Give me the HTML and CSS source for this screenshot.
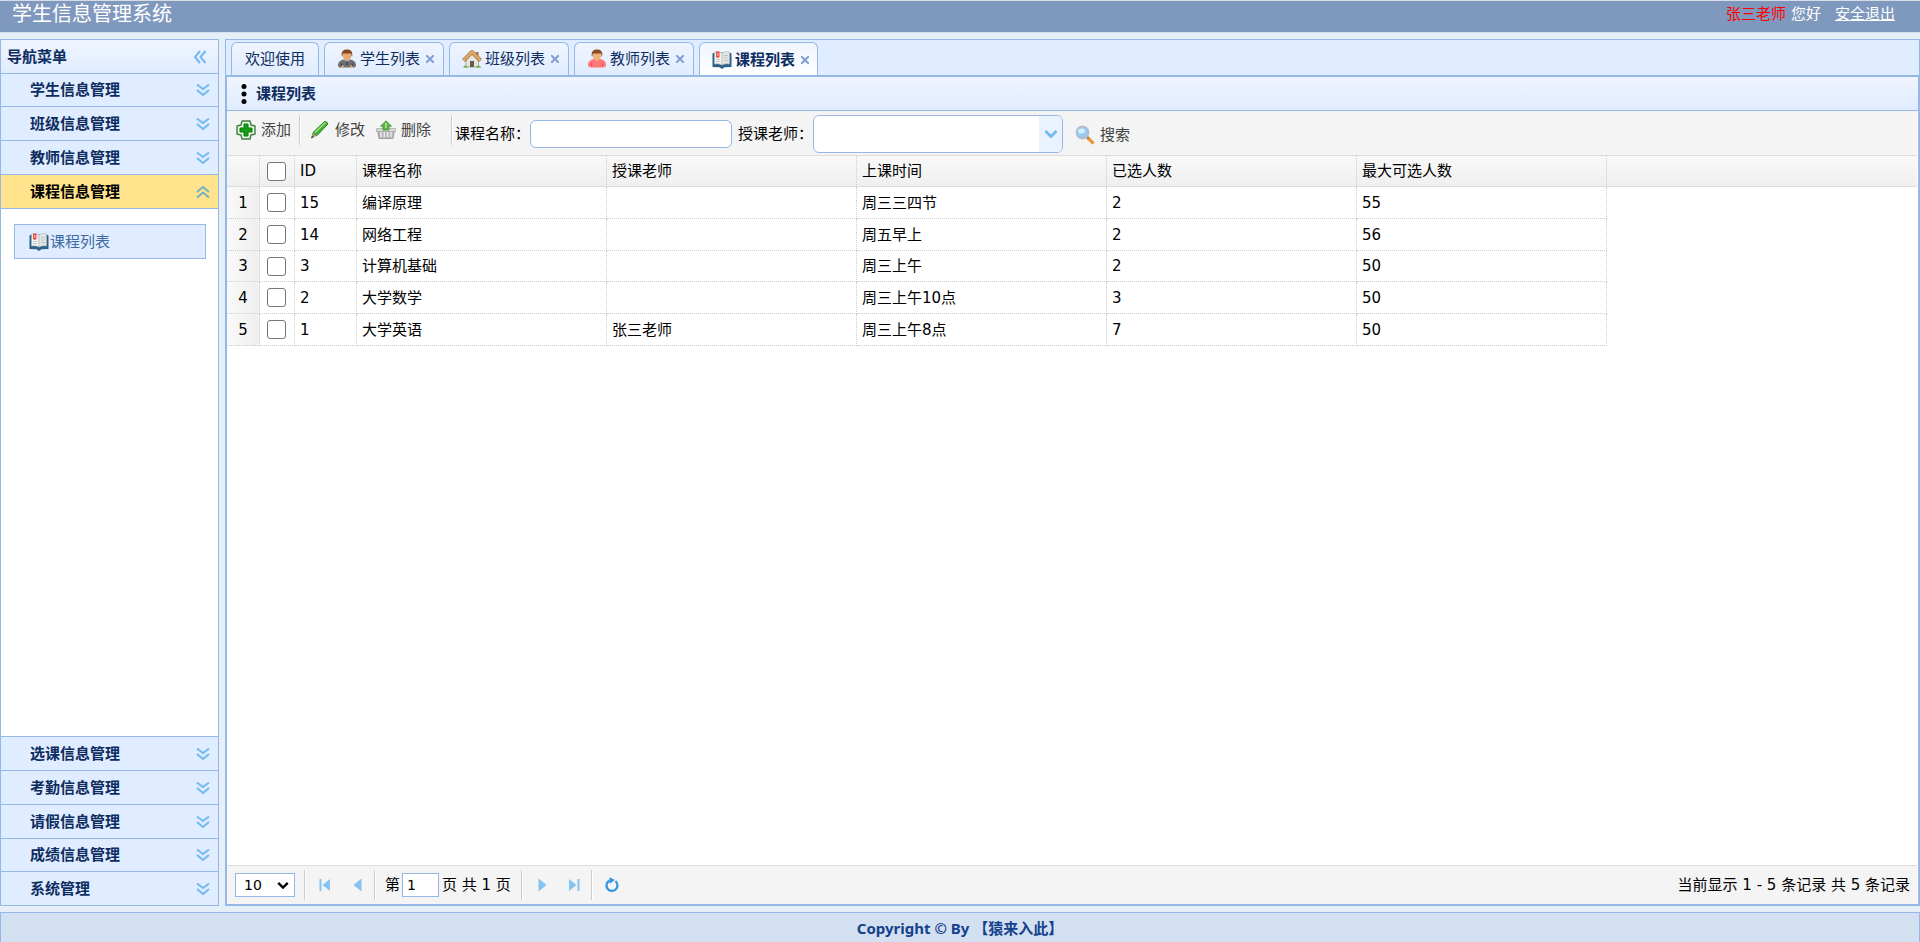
FILE: index.html
```html
<!DOCTYPE html>
<html lang="zh-CN">
<head>
<meta charset="utf-8">
<title>学生信息管理系统</title>
<link rel="stylesheet" href="styles.css">
</head>
<body>
<svg class="defs" aria-hidden="true">
  <defs>
    <linearGradient id="g-green" x1="0" y1="0" x2="1" y2="1"><stop offset="0" stop-color="#7fd660"/><stop offset="1" stop-color="#2f9a28"/></linearGradient>
    <linearGradient id="g-grey" x1="0" y1="0" x2="0" y2="1"><stop offset="0" stop-color="#dedede"/><stop offset="1" stop-color="#9c9c9c"/></linearGradient>
    <radialGradient id="g-lens" cx="0.5" cy="0.7" r="0.7"><stop offset="0" stop-color="#cdf0ff"/><stop offset="1" stop-color="#6fb4ee"/></radialGradient>
    <symbol id="i-down" viewBox="0 0 14 14"><path d="M1 1.500l6 4.500 6-4.500M1 7l6 5 6-5" fill="none" stroke="#74b8f0" stroke-width="2"/></symbol>
    <symbol id="i-up" viewBox="0 0 14 14"><path d="M1 7l6-5 6 5M1 12.500l6-5 6 5" fill="none" stroke="#72b2bd" stroke-width="2"/></symbol>
    <symbol id="i-left" viewBox="0 0 14 14"><path d="M7 1L2 7l5 6M12.500 1l-5 6 5 6" fill="none" stroke="#74b8f0" stroke-width="2"/></symbol>
    <symbol id="i-chev" viewBox="0 0 14 10"><path d="M1.500 2l5.500 5.500L12.500 2" fill="none" stroke="currentColor" stroke-width="2.800"/></symbol>
    <symbol id="i-student" viewBox="0 0 20 20">
      <path d="M1 16.500c0-4 3-5.500 6-6h6c3 .5 6 2 6 6 0 1.200-1 2-2 2H3c-1 0-2-.8-2-2z" fill="#6d6f73"/>
      <path d="M4.500 18v-3.500M15.500 18v-3.500" stroke="#45474b" stroke-width="1.500"/>
      <path d="M7.500 10.500l2.500 3.500 2.500-3.500z" fill="#ddd"/><path d="M10 11.500v4.500" stroke="#333" stroke-width="1.300"/>
      <ellipse cx="10" cy="6.500" rx="4.300" ry="4.800" fill="#e8aa74"/>
      <path d="M5 8C3.500 2 7 .5 10 .5S16.500 2 15 8l-1-3.500H6z" fill="#85491f"/>
      <path d="M2.500 18.500l3.500-2.500 1.500 2.500zM17.500 18.500L14 16l-1.500 2.500z" fill="#dfa873"/>
    </symbol>
    <symbol id="i-teacher" viewBox="0 0 20 20">
      <path d="M1 16c0-4 3-5.500 6-6h6c3 .5 6 2 6 6 0 1.500-1 2.500-3 2.500H4c-2 0-3-1-3-2.500z" fill="#ff7777"/>
      <path d="M7.500 10l2.500 3 2.500-3z" fill="#eba977"/>
      <path d="M4.500 17v-3M15.500 17v-3" stroke="#e45151"/>
      <ellipse cx="10" cy="6.500" rx="4.300" ry="4.800" fill="#eeb07c"/>
      <path d="M5 8C3.500 2 7 .5 10 .5S16.500 2 15 8l-1-3.500H6z" fill="#8d4b25"/>
    </symbol>
    <symbol id="i-house" viewBox="0 0 20 20">
      <path d="M4 8.500V18h12.500V8.500L10 3z" fill="#e6e6e0" stroke="#9a9a90" stroke-width=".8"/>
      <path d="M14 3h2.500v5L14 6z" fill="#b46a3b"/>
      <path d="M1.500 11.500L10 3l8.500 8.500" fill="none" stroke="#a5743a" stroke-width="4" stroke-linejoin="round"/>
      <path d="M1.500 11.200L10 2.900l8.500 8.300" fill="none" stroke="#d9a766" stroke-width="2.800"/>
      <path d="M8 18v-6h4v6z" fill="#6b5a4c"/>
      <path d="M1 18.500q2-4 5 0zM13.500 18.500q3-4 6 0z" fill="#69a83f"/>
    </symbol>
    <symbol id="i-book" viewBox="0 0 20 20">
      <path d="M.5 3.500l2-1h15l2 1V17l-7 .3-2.500 1.700-2.500-1.700L.5 17z" fill="#2e6188"/>
      <path d="M2.500 2Q7 .5 10 3v12q-4-2-7.500-1z" fill="#f4f4f1" stroke="#a8b8c3" stroke-width=".6"/>
      <path d="M17.500 2Q13 .5 10 3v12q4-2 7.500-1z" fill="#e4e4e1" stroke="#a8b8c3" stroke-width=".6"/>
      <path d="M4 9.500h4M4 11.500h4M12 5.500h4M12 8h4M12 10.500h4" stroke="#bbb" stroke-width=".8"/>
      <path d="M4 1.500h3.500V7L5.700 8 4 7z" fill="#ed4b40"/><path d="M5.300 3h1v3h-1z" fill="#ffc5bb"/>
    </symbol>
    <symbol id="i-add" viewBox="0 0 20 20">
      <path d="M6 1h8l1 4 4 1v8l-4 1-1 4H6l-1-4-4-1V6l4-1z" fill="#e9f6e6" stroke="#3c7f40" stroke-width="1.400" stroke-linejoin="round"/>
      <path d="M8 4h4v4h4v4h-4v4H8v-4H4V8h4z" fill="#179c17" stroke="#0c7c12"/>
    </symbol>
    <symbol id="i-edit" viewBox="0 0 20 20">
      <path d="M2 16.500L3.500 12 14.500 1.500q2.500-.5 3.500 2.500L7.500 15z" fill="#44ad34" stroke="#2f8629"/>
      <path d="M5 12.500L15.500 2.500" stroke="#9be37e" stroke-width="1.500"/>
      <path d="M1 18.500l2-5.500 3.500 3z" fill="#a4a07c"/><path d="M1 18.500l1-2.800 1.800 1.500z" fill="#245c2a"/>
    </symbol>
    <symbol id="i-del" viewBox="0 0 20 20">
      <path d="M1.500 10h17l-1.500 8.500H3z" fill="#b9b9b9" stroke="#999" stroke-width=".9"/>
      <path d="M5 12v5M8.300 12v5M11.600 12v5M15 12v5" stroke="#eee" stroke-width="1.300"/>
      <path d="M.5 8.500h19v3H.5z" fill="#d8d8d8" stroke="#a5a5a5" stroke-width=".7"/>
      <path d="M10 .8l5.500 5.400H13V10H7V6.200H4.500z" fill="#62b543" stroke="#48953b" stroke-width=".9"/>
      <path d="M10 3v5" stroke="#b7e69f" stroke-width="1.500"/>
    </symbol>
    <symbol id="i-search" viewBox="0 0 20 20">
      <path d="M13 13l4.500 4.500" stroke="#e8963a" stroke-width="3.200" stroke-linecap="round"/>
      <path d="M11.500 11.500l2 2" stroke="#777" stroke-width="2"/>
      <circle cx="7.500" cy="7.500" r="6" fill="#93cbf5" stroke="#b7bdca" stroke-width="1.800"/>
      <ellipse cx="6.500" cy="6" rx="3.500" ry="2.500" fill="#d4eeff"/>
    </symbol>
    <symbol id="i-first" viewBox="0 0 14 14"><path d="M1.500 1h2v12h-2zM12 1v12L4.500 7z" fill="#85c4f0"/></symbol>
    <symbol id="i-prev" viewBox="0 0 14 14"><path d="M11.500 0.500v13L3.500 7z" fill="#85c4f0"/></symbol>
    <symbol id="i-next" viewBox="0 0 14 14"><path d="M3.500 0.500v13l8-6.500z" fill="#85c4f0"/></symbol>
    <symbol id="i-last" viewBox="0 0 14 14"><path d="M10.500 1h2v12h-2zM2 1v12l7.500-6z" fill="#85c4f0"/></symbol>
    <symbol id="i-reload" viewBox="0 0 16 16"><path d="M5.500 3.500A5.500 5.500 0 1 0 11.500 4.200" fill="none" stroke="#3597df" stroke-width="2.300"/><path d="M5.500.2v6.500L11 3z" fill="#3597df"/></symbol>
    <symbol id="i-dots" viewBox="0 0 20 20"><circle cx="10" cy="2.500" r="2.500"/><circle cx="10" cy="10" r="2.500"/><circle cx="10" cy="17.500" r="2.500"/></symbol>
  </defs>
</svg>

<header class="topbar">
  <h1 class="topbar-title">学生信息管理系统</h1>
  <p class="topbar-user"><span class="user-name">张三老师</span><span>您好</span><a class="logout" href="#">安全退出</a></p>
</header>

<div class="workspace">
  <nav class="sidebar" aria-label="导航菜单">
    <div class="sidebar-head"><h2 class="sidebar-title">导航菜单</h2><button class="plain" aria-label="折叠"><svg class="i14"><use href="#i-left"/></svg></button></div>
    <button class="menu">学生信息管理<svg class="i14"><use href="#i-down"/></svg></button>
    <button class="menu">班级信息管理<svg class="i14"><use href="#i-down"/></svg></button>
    <button class="menu">教师信息管理<svg class="i14"><use href="#i-down"/></svg></button>
    <button class="menu menu-open" aria-expanded="true">课程信息管理<svg class="i14"><use href="#i-up"/></svg></button>
    <div class="submenu"><a class="submenu-link" href="#"><svg class="i20"><use href="#i-book"/></svg>课程列表</a></div>
    <button class="menu">选课信息管理<svg class="i14"><use href="#i-down"/></svg></button>
    <button class="menu">考勤信息管理<svg class="i14"><use href="#i-down"/></svg></button>
    <button class="menu">请假信息管理<svg class="i14"><use href="#i-down"/></svg></button>
    <button class="menu">成绩信息管理<svg class="i14"><use href="#i-down"/></svg></button>
    <button class="menu">系统管理<svg class="i14"><use href="#i-down"/></svg></button>
  </nav>

  <main class="main">
    <div class="tabs">
      <div class="tab"><button class="tab-name">欢迎使用</button></div>
      <div class="tab"><button class="tab-name"><svg class="i20"><use href="#i-student"/></svg>学生列表</button><button class="tab-close" aria-label="关闭学生列表"><svg class="i8" viewBox="0 0 8 8"><path d="M0 0l8 8M8 0L0 8"/></svg></button></div>
      <div class="tab"><button class="tab-name"><svg class="i20"><use href="#i-house"/></svg>班级列表</button><button class="tab-close" aria-label="关闭班级列表"><svg class="i8" viewBox="0 0 8 8"><path d="M0 0l8 8M8 0L0 8"/></svg></button></div>
      <div class="tab"><button class="tab-name"><svg class="i20"><use href="#i-teacher"/></svg>教师列表</button><button class="tab-close" aria-label="关闭教师列表"><svg class="i8" viewBox="0 0 8 8"><path d="M0 0l8 8M8 0L0 8"/></svg></button></div>
      <div class="tab tab-on"><button class="tab-name"><svg class="i20"><use href="#i-book"/></svg>课程列表</button><button class="tab-close" aria-label="关闭课程列表"><svg class="i8" viewBox="0 0 8 8"><path d="M0 0l8 8M8 0L0 8"/></svg></button></div>
    </div>

    <section class="panel">
      <div class="panel-head"><svg class="i20"><use href="#i-dots"/></svg><h2 class="panel-title">课程列表</h2></div>
      <div class="grid">
        <form class="toolbar">
          <div class="tools">
            <button type="button" class="tool"><svg class="i20"><use href="#i-add"/></svg>添加</button>
            <span class="sep"></span>
            <button type="button" class="tool"><svg class="i20"><use href="#i-edit"/></svg>修改</button>
            <button type="button" class="tool"><svg class="i20"><use href="#i-del"/></svg>删除</button>
            <span class="sep sep-last"></span>
          </div>
          <label for="course">课程名称：</label><input class="text" id="course" type="text">
          <label class="label-teacher" for="teacher">授课老师：</label>
          <span class="combo"><select class="combo-select" id="teacher"><option></option><option>张三老师</option></select><span class="combo-arrow"><svg class="i14"><use href="#i-chev"/></svg></span></span>
          <button type="button" class="tool search"><svg class="i20"><use href="#i-search"/></svg>搜索</button>
        </form>

        <div class="rows">
          <table class="table">
            <colgroup><col class="c-num"><col class="c-check"><col class="c-id"><col class="c-data"><col class="c-data"><col class="c-data"><col class="c-data"><col class="c-data"><col></colgroup>
            <thead>
              <tr><th></th><th class="check"><input class="box" type="checkbox" aria-label="全选"></th><th>ID</th><th>课程名称</th><th>授课老师</th><th>上课时间</th><th>已选人数</th><th>最大可选人数</th><th class="rest"></th></tr>
            </thead>
            <tbody>
              <tr><td class="num">1</td><td class="check"><input class="box" type="checkbox" aria-label="选择 15"></td><td>15</td><td>编译原理</td><td></td><td>周三三四节</td><td>2</td><td>55</td><td class="rest"></td></tr>
              <tr><td class="num">2</td><td class="check"><input class="box" type="checkbox" aria-label="选择 14"></td><td>14</td><td>网络工程</td><td></td><td>周五早上</td><td>2</td><td>56</td><td class="rest"></td></tr>
              <tr><td class="num">3</td><td class="check"><input class="box" type="checkbox" aria-label="选择 3"></td><td>3</td><td>计算机基础</td><td></td><td>周三上午</td><td>2</td><td>50</td><td class="rest"></td></tr>
              <tr><td class="num">4</td><td class="check"><input class="box" type="checkbox" aria-label="选择 2"></td><td>2</td><td>大学数学</td><td></td><td>周三上午10点</td><td>3</td><td>50</td><td class="rest"></td></tr>
              <tr><td class="num">5</td><td class="check"><input class="box" type="checkbox" aria-label="选择 1"></td><td>1</td><td>大学英语</td><td>张三老师</td><td>周三上午8点</td><td>7</td><td>50</td><td class="rest"></td></tr>
            </tbody>
          </table>
        </div>

        <div class="pager">
          <span class="size"><select class="size-select" aria-label="每页条数"><option>10</option><option>20</option></select><svg class="size-arrow"><use href="#i-chev"/></svg></span>
          <span class="sep"></span>
          <button class="page-btn" aria-label="首页"><svg class="i14"><use href="#i-first"/></svg></button>
          <button class="page-btn" aria-label="上一页"><svg class="i14"><use href="#i-prev"/></svg></button>
          <span class="sep"></span>
          <label class="page-label" for="page">第</label><input class="page-input" id="page" type="text" value="1"><span class="page-total">页 共 1 页</span>
          <span class="sep"></span>
          <button class="page-btn" aria-label="下一页"><svg class="i14"><use href="#i-next"/></svg></button>
          <button class="page-btn" aria-label="末页"><svg class="i14"><use href="#i-last"/></svg></button>
          <span class="sep"></span>
          <button class="page-btn" aria-label="刷新"><svg class="i16"><use href="#i-reload"/></svg></button>
          <span class="summary">当前显示 1 - 5 条记录 共 5 条记录</span>
        </div>
      </div>
    </section>
  </main>
</div>

<footer class="footer">Copyright © By 【猿来入此】</footer>
</body>
</html>
```

FILE: styles.css
```css
* { box-sizing: border-box; }

body {
  display: flex;
  flex-direction: column;
  height: 100vh;
  margin: 0;
  background: #e6eef8;
  color: #000;
  font: 15px/20px "DejaVu Sans", "Noto Sans CJK SC", sans-serif;
}

h1, h2, p { margin: 0; }

button, input, select {
  margin: 0;
  padding: 0;
  border: 0;
  background: none;
  color: inherit;
  font: inherit;
}

svg { display: block; flex: none; }
.defs { position: absolute; width: 0; height: 0; }
.i8 { width: 8px; height: 8px; fill: none; stroke: #7f9fd3; stroke-width: 2px; }
.i14 { width: 14px; height: 14px; }
.i16 { width: 16px; height: 16px; }
.i20 { width: 20px; height: 20px; }

.topbar {
  display: flex;
  justify-content: space-between;
  height: 33px;
  padding: 3px 25px 0 12px;
  border-top: 1px solid #d5dce4;
  border-bottom: 1px solid #d2e0f2;
  background: #7f99be;
  color: #fff;
}
.topbar-title { font-size: 20px; font-weight: 400; line-height: 20px; }
.topbar-user { display: flex; gap: 5px; }
.user-name { color: #f00; }
.logout { margin-left: 9px; color: #fff; }

.workspace { display: flex; flex: 1; gap: 6px; min-height: 0; padding: 6px 0; }

.sidebar {
  display: flex;
  flex: none;
  flex-direction: column;
  width: 219px;
  border: 1px solid #95b8e7;
  background: #fff;
}
.sidebar-head {
  display: flex;
  align-items: center;
  justify-content: space-between;
  height: 34px;
  padding: 0 11px 0 6px;
  border-bottom: 1px solid #95b8e7;
  background: linear-gradient(#eff5ff, #e0ecff);
}
.sidebar-title, .panel-title { color: #0e2d5f; font-size: 15px; font-weight: 700; }
.menu {
  display: flex;
  flex: none;
  align-items: center;
  justify-content: space-between;
  height: 34px;
  padding: 0 8px 0 29px;
  border-bottom: 1px solid #95b8e7;
  background: #e0ecff;
  color: #0e2d5f;
  font-weight: 700;
}
.menu:nth-child(2), .menu:nth-child(10), .menu:last-child { height: 33px; }
.menu:last-child { border-bottom: 0; }
.menu-open { background: #ffe48d; color: #000; }
.submenu { flex: 1; padding: 15px 12px 0 13px; border-bottom: 1px solid #95b8e7; }
.submenu-link {
  display: flex;
  align-items: center;
  height: 35px;
  padding-left: 14px;
  gap: 1px;
  border: 1px solid #95b8e7;
  background: #e0ecff;
  color: #416aa3;
  text-decoration: none;
}

.main { display: flex; flex: 1; flex-direction: column; min-width: 0; }
.tabs {
  display: flex;
  flex: none;
  gap: 5px;
  height: 36px;
  padding: 2px 5px 0;
  border: 1px solid #95b8e7;
  border-bottom: 0;
  background: #e0ecff;
}
.tab {
  display: flex;
  align-items: center;
  gap: 6px;
  padding: 0 9px 0 12px;
  border: 1px solid #95b8e7;
  border-bottom: 0;
  border-radius: 6px 6px 0 0;
  background: linear-gradient(#eff5ff, #e0ecff);
  color: #0e2d5f;
}
.tab:first-child { padding: 0 13px; }
.tab-name { display: flex; align-items: center; gap: 3px; }
.tab-on {
  height: 34px;
  padding-right: 8px;
  background: linear-gradient(#eff5ff, #fff);
  font-weight: 700;
}

.panel {
  display: flex;
  flex: 1;
  flex-direction: column;
  min-height: 0;
  border: 2px solid #95b8e7;
}
.panel-head {
  display: flex;
  flex: none;
  align-items: center;
  gap: 2px;
  height: 34px;
  padding: 1px 0 0 7px;
  border-bottom: 1px solid #95b8e7;
  background: linear-gradient(#eff5ff, #e0ecff);
}
.grid {
  display: flex;
  flex: 1;
  flex-direction: column;
  min-height: 0;
  padding-right: 1px;
  background: #fff;
}

.toolbar {
  display: flex;
  flex: none;
  align-items: center;
  height: 45px;
  padding-top: 2px;
  border-bottom: 1px solid #ddd;
  background: #f4f4f4;
}
.tools { display: flex; align-items: center; align-self: flex-start; padding: 2px 0 0 9px; }
.tool { display: flex; align-items: center; gap: 5px; color: #444; }
.tools .sep { margin: 0 9px 0 8px; }
.tools .tool + .tool { margin-left: 11px; }
.tools .sep-last { margin: 0 2px 0 20px; }
.sep { flex: none; width: 2px; height: 30px; border-left: 1px solid #ccc; border-right: 1px solid #fff; }
.text {
  width: 202px;
  height: 28px;
  padding: 0 5px;
  border: 1px solid #95b8e7;
  border-radius: 6px;
  background: #fff;
}
.label-teacher { margin-left: 6px; }
.combo { position: relative; width: 250px; height: 38px; }
.combo-select {
  width: 100%;
  height: 100%;
  padding: 0 28px 0 5px;
  appearance: none;
  border: 1px solid #95b8e7;
  border-radius: 6px;
  background: #fff;
}
.combo-arrow {
  position: absolute;
  top: 1px;
  right: 1px;
  bottom: 1px;
  display: flex;
  align-items: center;
  justify-content: center;
  width: 23px;
  border-radius: 0 5px 5px 0;
  background: #eaf2ff;
  color: #74b8f0;
  pointer-events: none;
}
.search { padding: 2px 0 0 12px; }

.rows { flex: 1; min-height: 0; overflow: hidden; }
.table { width: 100%; border-spacing: 0; table-layout: fixed; }
.c-num { width: 33px; }
.c-check { width: 35px; }
.c-id { width: 62px; }
.c-data { width: 250px; }
.table th, .table td {
  height: 32px;
  padding: 0 5px;
  border-right: 1px dotted #ccc;
  border-bottom: 1px dotted #ccc;
  font-weight: 400;
  text-align: left;
}
.table th {
  height: 31px;
  border-bottom: 1px solid #ddd;
  background: linear-gradient(#f9f9f9, #efefef);
}
.table tr:nth-child(3) td { height: 31px; }
.table .num { padding: 0; background: linear-gradient(90deg, #f9f9f9, #efefef); text-align: center; }
.table .check { padding: 0 0 0 7px; }
.table .rest { border-right: 0; }
.table td.rest { border-bottom: 0; }
.box {
  display: block;
  width: 19px;
  height: 19px;
  appearance: none;
  border: 1px solid #767676;
  border-radius: 3px;
  background: #fff;
}

.pager {
  display: flex;
  flex: none;
  align-items: center;
  height: 39px;
  padding: 0 7px 0 8px;
  border-top: 1px solid #ddd;
  background: #f4f4f4;
}
.size { position: relative; width: 60px; height: 24px; margin-right: 9px; }
.size-select {
  width: 100%;
  height: 100%;
  padding-left: 8px;
  appearance: none;
  border: 1px solid #95b8e7;
  background: #fff;
  font-size: 14px;
}
.size-arrow { position: absolute; top: 8px; right: 6px; width: 12px; height: 9px; pointer-events: none; }
.page-btn { display: flex; justify-content: center; width: 32px; }
.pager .sep + .page-btn { margin-left: 3px; }
.page-btn + .sep { margin-left: 1px; }
.page-label { margin: 0 2px 0 9px; }
.page-input { width: 37px; height: 24px; padding: 0 4px; border: 1px solid #95b8e7; background: #fff; font-size: 14px; }
.page-total { margin: 0 10px 0 3px; }
.summary { margin-left: auto; }

.footer {
  flex: none;
  height: 30px;
  padding-top: 5px;
  border: 1px solid #95b8e7;
  border-bottom: 0;
  background: #d2e0f2;
  color: #15428b;
  font-family: "Noto Sans", "Noto Sans CJK SC", sans-serif;
  font-weight: 700;
  text-align: center;
}
```
